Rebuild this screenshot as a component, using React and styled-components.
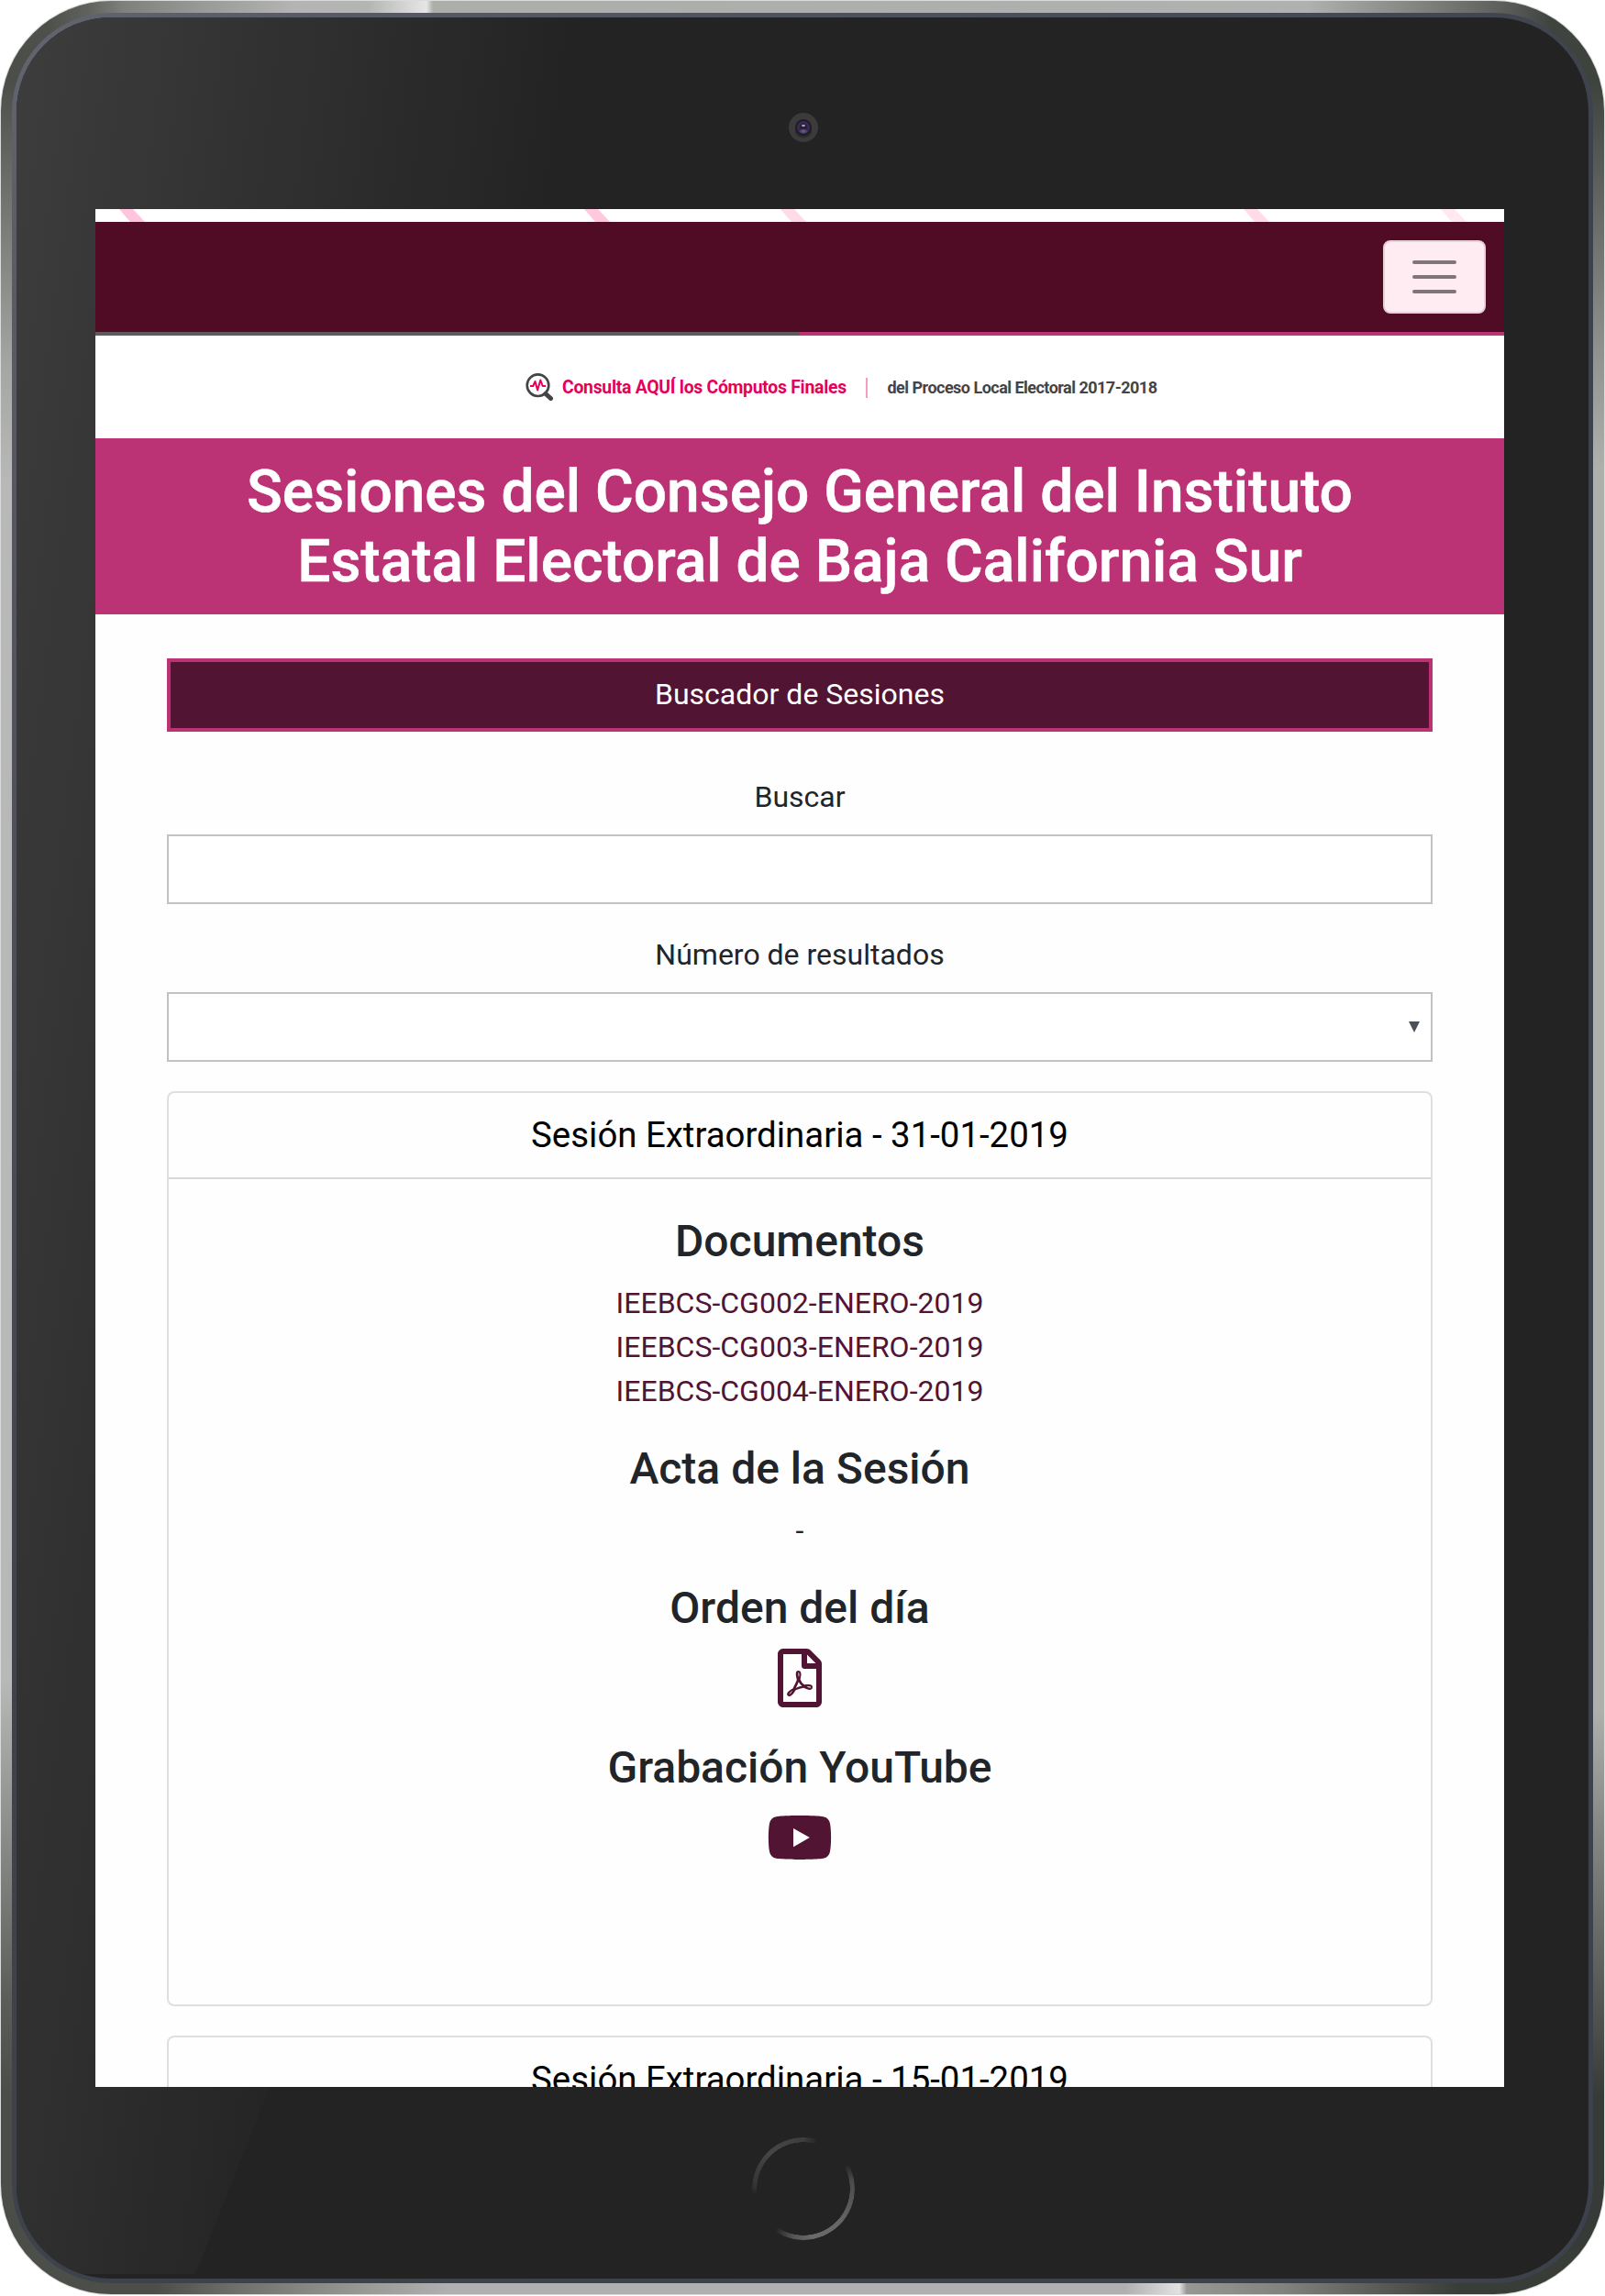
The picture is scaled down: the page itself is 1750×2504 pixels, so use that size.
import React from "react";
import styled, { createGlobalStyle } from "styled-components";
import { FaRegFilePdf, FaYoutube } from "react-icons/fa";

const GlobalStyle = createGlobalStyle`
  *, *::before, *::after { box-sizing: border-box; }
  body { margin: 0; background: #fff; font-family: Roboto, "Liberation Sans", sans-serif; color: #212529; }
  #root { width: 1750px; height: 2504px; overflow: hidden; }
`;

const Tablet = styled.div`
  width: 1748px;
  height: 2501px;
  margin: 1px;
  padding: 13px 12px 12px;
  border-radius: 120px;
  box-shadow: 0 0 0 1px #b4b8b480;
  background:
    linear-gradient(90deg, #4c4f4a 50px, #60625e 95px, #7e817c 135px, #9a9d99 230px, #b4b4b4 320px, #b3b5b3 400px, #e6e6e6 464px, #abaea9 471px, #b0b0b0 1424px, #9a9c99 1480px, #787a76 1570px, #5b5d5a 1640px, #40443f 1690px) 0 0 / 100% 48px no-repeat,
    linear-gradient(90deg, #4c4e4a 170px, #6e716c 260px, #999b97 400px, #b0b0b0 490px, #b0b0b0 1226px, #e2e2e2 1285px, #969894 1293px, #80827e 1400px, #5a5c58 1500px, #393d38 1590px) 0 100% / 100% 48px no-repeat,
    linear-gradient(180deg, #4b4e49 90px, #7b7d79 250px, #a5a7a4 400px, #b8b8b8 525px, #b8b8b8 1831px, #8d8f8c 1990px, #5b5d59 2180px, #4a4d48 2280px) 0 0 / 50% 100% no-repeat,
    linear-gradient(180deg, #3e433e 90px, #6b6e6a 250px, #949693 400px, #aeb0ac 510px, #aeb0ac 1865px, #868885 1990px, #555754 2180px, #373b37 2285px) 100% 0 / 50% 100% no-repeat;
`;

const Rim = styled.div`
  height: 100%;
  padding: 5px;
  border-radius: 108px;
  background: linear-gradient(135deg, #636670 0, #585b66 220px, #3d424c 1300px, #3d414b 100%);
`;

const Glass = styled.div`
  position: relative;
  height: 100%;
  border-radius: 103px;
  overflow: hidden;
  background: #232323;
  display: flex;
  flex-direction: column;
  align-items: center;
  &::before {
    content: "";
    position: absolute;
    inset: 0 0 5px 0;
    background: linear-gradient(97.4deg, #3d3d3d 0, #232323 610px);
    clip-path: polygon(0 0, 1175px 0, 195px 100%, 0 100%);
  }
`;

const Bezel = styled.div`
  position: relative;
  flex: none;
  width: 100%;
  height: 209px;
  display: flex;
  justify-content: center;
  align-items: flex-start;
  padding: ${(p) => p.$top}px 0 0 2px;
`;

const Camera = styled.div`
  width: 32px;
  height: 32px;
  border-radius: 50%;
  background:
    radial-gradient(ellipse 2.5px 1.6px at 50% 14px, #a9a1b6 50%, transparent 100%),
    radial-gradient(ellipse 5px 3px at 50% 20px, #77678e 0, transparent 100%),
    radial-gradient(circle at 50% 16px, #231b2e 0, #2b203b 4px, #3d2b5a 5px, #372852 6.5px, #1c1923 7.5px, #211f24 8.5px, transparent 9.5px),
    radial-gradient(ellipse 10px 8px at 50% 20px, #2b2b2b 80%, transparent 100%),
    #3b3b3b;
`;

const HomeButton = styled.div`
  width: 112px;
  height: 112px;
  border-radius: 50%;
  background: conic-gradient(#3e3e3e 0, #23232300 17deg, #23232300 60deg, #4a4a4a 80deg, #666 135deg, #6a6a6a 170deg, #555 192deg, #23232300 215deg, #23232300 262deg, #353535 275deg, #464646 320deg, #3e3e3e 360deg);
  mask: radial-gradient(circle, transparent 50.5px, #000 51px);
`;

const Screen = styled.main`
  position: relative;
  flex: none;
  width: 1536px;
  height: 2048px;
  margin-right: 6px;
  overflow: hidden;
  background: #fefefe;
`;

const HeaderStrip = styled.div`
  height: 14px;
  background: #fff;
  svg { display: block; }
`;

const NavBar = styled.nav`
  height: 124px;
  display: flex;
  justify-content: flex-end;
  padding: 20px 20px 0;
  background:
    linear-gradient(90deg, #605a5c 50%, #bc3375 50%) 0 100% / 100% 4px no-repeat,
    #500c24;
`;

const Toggler = styled.button`
  width: 112px;
  height: 80px;
  padding: 0;
  display: flex;
  flex-direction: column;
  align-items: center;
  justify-content: center;
  gap: 12px;
  border: 2px solid #e6d1d8;
  border-radius: 8px;
  background: #ffebf2;
`;

const TogglerLine = styled.span`
  width: 48px;
  height: 4px;
  border-radius: 2px;
  background: #807579;
`;

const Promo = styled.div`
  height: 112px;
  padding: 0 0 1px 469px;
  display: flex;
  align-items: center;
  background: #fff;
  white-space: nowrap;
`;

const PromoLead = styled.span`
  flex: none;
  width: 341px;
  padding: 2px 0 0 10px;
  font-size: 19.4px;
  font-weight: 700;
  letter-spacing: -0.28px;
  color: #e5005b;
`;

const PromoRest = styled.span`
  padding: 2px 0 0 22px;
  font-size: 18px;
  font-weight: 700;
  letter-spacing: -0.52px;
  color: #444446;
`;

const PromoDivider = styled.span`
  width: 1.5px;
  height: 22px;
  margin-top: 2px;
  background: #f59cc2;
`;

const Title = styled.h1`
  height: 192px;
  margin: 0;
  padding: 21px 120px 0;
  background: #bc3375;
  color: #fff;
  font-size: 64px;
  font-weight: 500;
  line-height: 76px;
  text-align: center;
  -webkit-text-stroke: 0.6px #fff;
`;

const Content = styled.div`
  padding: 48px 78px 0;
`;

const SearchHeader = styled.div`
  height: 80px;
  border: 4px solid #bc3375;
  background: #511433;
  color: #fff;
  font-size: 32px;
  line-height: 70px;
  text-align: center;
  margin-bottom: 48px;
`;

const Field = styled.label`
  display: block;
  margin-bottom: 32px;
  font-size: 32px;
  line-height: 46px;
  text-align: center;
`;

const Control = styled.span`
  display: flex;
  align-items: center;
  justify-content: flex-end;
  height: 76px;
  margin-top: 18px;
  padding-right: 12px;
  border: 2px solid #c2c2c2;
  background: #fff;
`;

const Caret = styled.span`
  width: 12px;
  height: 12px;
  background: #4a4f58;
  clip-path: polygon(0 0, 100% 0, 50% 100%);
`;

const Card = styled.article`
  height: 998px;
  margin-bottom: 32px;
  border: 2px solid #dfdfdf;
  border-radius: 8px;
  text-align: center;
`;

const CardHeader = styled.h2`
  height: 94px;
  margin: 0;
  border-bottom: 2px solid #d8d8d8;
  color: #000;
  font-size: 38.4px;
  font-weight: 400;
  line-height: 91px;
`;

const CardBody = styled.div`
  display: flex;
  flex-direction: column;
  padding-top: 39px;
`;

const Section = styled.section`
  margin-bottom: ${(p) => p.$gap}px;
  font-size: 32px;
  line-height: 48px;
  svg { display: block; margin: 0 auto; color: #511433; }
`;

const SectionTitle = styled.h3`
  margin: 0 0 ${(p) => p.$space ?? 16}px;
  font-size: 48px;
  font-weight: 500;
  line-height: 57.6px;
`;

const DocLink = styled.a`
  display: block;
  color: #511433;
  text-decoration: none;
`;

const stripes = [
  [26, "#ffc5dc"],
  [533, "#ffc8de"],
  [747, "#ffdbe8"],
  [1252, "#ffdce8"],
  [1467, "#ffe8f0"],
];

const documents = ["IEEBCS-CG002-ENERO-2019", "IEEBCS-CG003-ENERO-2019", "IEEBCS-CG004-ENERO-2019"];

const MagnifierPulse = () => (
  <svg width="30" height="30" viewBox="0 0 30 30" fill="none">
    <circle cx="13.5" cy="13.2" r="11.8" stroke="#444446" strokeWidth="2.6" />
    <path d="M22 22.5l5.5 5" stroke="#444446" strokeWidth="5" strokeLinecap="round" />
    <path d="M5 14h3.2l2.3-5 2.6 9.5 3.2-11 2.4 6.5H22" stroke="#e5005b" strokeWidth="2" strokeLinejoin="round" />
  </svg>
);

export default function App() {
  return (
    <>
      <GlobalStyle />
      <Tablet>
        <Rim>
          <Glass>
            <Bezel $top={104}>
              <Camera />
            </Bezel>
            <Screen>
              <HeaderStrip>
                <svg width="1536" height="14">
                  {stripes.map(([x, color]) => (
                    <path key={x} d={`M${x} 0h15l13 14h-16z`} fill={color} />
                  ))}
                </svg>
              </HeaderStrip>
              <NavBar>
                <Toggler aria-label="Menú">
                  <TogglerLine />
                  <TogglerLine />
                  <TogglerLine />
                </Toggler>
              </NavBar>
              <Promo>
                <MagnifierPulse />
                <PromoLead>Consulta AQUÍ los Cómputos Finales</PromoLead>
                <PromoDivider />
                <PromoRest>del Proceso Local Electoral 2017-2018</PromoRest>
              </Promo>
              <Title>Sesiones del Consejo General del Instituto Estatal Electoral de Baja California Sur</Title>
              <Content>
                <SearchHeader>Buscador de Sesiones</SearchHeader>
                <Field>
                  Buscar
                  <Control />
                </Field>
                <Field>
                  Número de resultados
                  <Control>
                    <Caret />
                  </Control>
                </Field>
                <Card>
                  <CardHeader>Sesión Extraordinaria - 31-01-2019</CardHeader>
                  <CardBody>
                    <Section $gap={32.7}>
                      <SectionTitle $space={14}>Documentos</SectionTitle>
                      {documents.map((name) => (
                        <DocLink key={name}>{name}</DocLink>
                      ))}
                    </Section>
                    <Section $gap={32}>
                      <SectionTitle $space={13.7}>Acta de la Sesión</SectionTitle>-
                    </Section>
                    <Section $gap={36.6}>
                      <SectionTitle>Orden del día</SectionTitle>
                      <FaRegFilePdf size={64} />
                    </Section>
                    <Section $gap={0}>
                      <SectionTitle>Grabación YouTube</SectionTitle>
                      <FaYoutube style={{ width: 72, height: 64 }} viewBox="0 0 576 512" />
                    </Section>
                  </CardBody>
                </Card>
                <Card>
                  <CardHeader>Sesión Extraordinaria - 15-01-2019</CardHeader>
                </Card>
              </Content>
            </Screen>
            <Bezel $top={55}>
              <HomeButton />
            </Bezel>
          </Glass>
        </Rim>
      </Tablet>
    </>
  );
}
